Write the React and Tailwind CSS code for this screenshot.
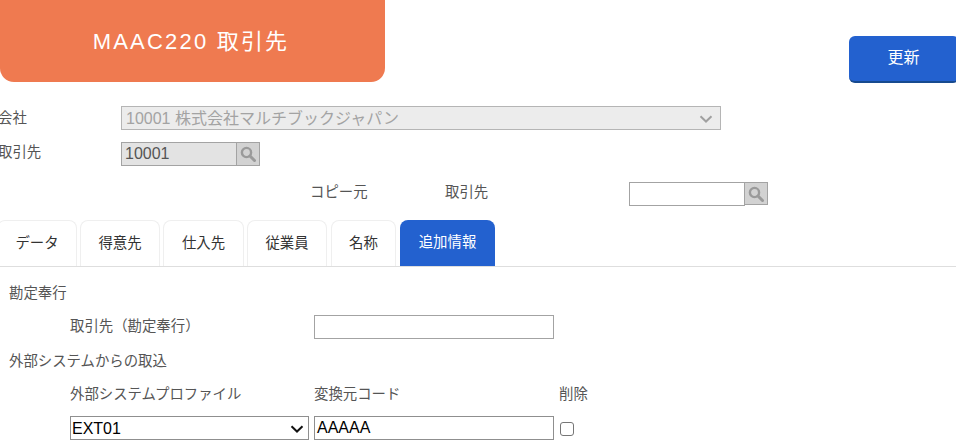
const font = "font-['Liberation_Sans','Noto_Sans_CJK_JP',sans-serif]";

function Mag() {
  return (
    <svg width="18" height="18" viewBox="0 0 18 18" fill="none">
      <circle cx="7.5" cy="7.5" r="4.6" stroke="#9a9a9a" strokeWidth="2.4" />
      <path d="M11 11l4.5 4.5" stroke="#9a9a9a" strokeWidth="3" strokeLinecap="round" />
    </svg>
  );
}

function Chevron({ color, className }) {
  return (
    <svg className={className} width="14" height="8" viewBox="0 0 14 8" fill="none">
      <path d="M1.5 1.2L7 6.5l5.5-5.3" stroke={color} strokeWidth="2" />
    </svg>
  );
}

function Tab({ children, w, active }) {
  return (
    <div
      className={
        active
          ? `${w} h-[46px] rounded-t-lg bg-[#2361cf] text-white flex items-center justify-center`
          : `${w} h-[46px] rounded-t-lg border border-b-0 border-[#efefef] bg-white text-[#333] flex items-center justify-center`
      }
    >
      {children}
    </div>
  );
}

export default function App() {
  return (
    <div className={`${font} w-[956px] h-[442px] overflow-hidden bg-white text-[#555] text-[14.4px]`}>
      <div className="flex items-start">
        <div className="w-[385px] h-[82px] shrink-0 bg-[#ef7a50] rounded-b-[14px] flex items-center justify-center pt-[1px] pr-[3px] text-white text-[22px] tracking-[2.2px]">
          MAAC220 取引先
        </div>
        <button className="ml-[464px] mt-[36px] w-[110px] h-[47px] shrink-0 rounded-md bg-[#2361cf] border-b-2 border-[#174a8f] text-white text-[16px] text-center pr-[1px] pb-[2px]">
          更新
        </button>
      </div>

      <div className="flex items-center mt-[23px] h-[24px]">
        <div className="w-[121px] -ml-[2px] mt-[2px] shrink-0">会社</div>
        <div className="relative ml-[2px] w-[600px] h-[24px]">
          <select
            disabled
            className="appearance-none w-full h-full border border-[#b5b5b5] bg-[#ececec] text-[#a3a3a3] text-[16px] pl-[4px] opacity-100"
          >
            <option>10001 株式会社マルチブックジャパン</option>
          </select>
          <Chevron color="#a0a0a0" className="absolute right-[8px] top-[9px]" />
        </div>
      </div>

      <div className="flex items-start mt-[12px] h-[24px]">
        <div className="w-[123px] -ml-[2px] shrink-0">取引先</div>
        <div className="w-[116px] h-[24px] border border-[#a3a3a3] bg-[#e3e3e3] text-[16px] text-[#555] pl-[3px] leading-[21px]">
          10001
        </div>
        <div className="w-[23px] h-[24px] border border-l-0 border-[#a3a3a3] bg-[#d2d2d2] flex items-center justify-center">
          <Mag />
        </div>
      </div>

      <div className="flex items-start mt-[16px] h-[24px]">
        <div className="ml-[310px] w-[135px]">コピー元</div>
        <div className="w-[184px]">取引先</div>
        <div className="w-[116px] h-[24px] border border-[#a3a3a3] bg-white" />
        <div className="w-[23px] h-[23px] border border-[#a3a3a3] border-l-0 bg-[#d2d2d2] flex items-center justify-center">
          <Mag />
        </div>
      </div>

      <div className="flex mt-[14px] h-[47px] border-b border-[#dedede] -ml-[3px] gap-[3px]">
        <Tab w="w-[80px]">データ</Tab>
        <Tab w="w-[80px]">得意先</Tab>
        <Tab w="w-[81px]">仕入先</Tab>
        <Tab w="w-[80px]">従業員</Tab>
        <div className="w-[1px] -ml-[3px]" />
        <Tab w="w-[65px]">名称</Tab>
        <div className="w-[1px] -ml-[3px]" />
        <Tab w="w-[95px]" active>追加情報</Tab>
      </div>

      <div className="pl-[9px] mt-[16px] h-[20px] leading-[20px]">勘定奉行</div>

      <div className="flex items-center mt-[12px] h-[24px]">
        <div className="ml-[70px] w-[244px]">取引先（勘定奉行）</div>
        <div className="w-[240px] h-[24px] border border-[#a3a3a3] bg-white" />
      </div>

      <div className="pl-[9px] mt-[12px] h-[20px] leading-[20px]">外部システムからの取込</div>

      <div className="flex items-center mt-[14px] h-[20px]">
        <div className="ml-[70px] w-[244px]">外部システムプロファイル</div>
        <div className="w-[245px]">変換元コード</div>
        <div>削除</div>
      </div>

      <div className="flex items-center mt-[11px] h-[24px]">
        <div className="relative ml-[70px] w-[239px] h-[24px]">
          <select className="appearance-none w-full h-full border border-[#8f8f8f] bg-white text-black text-[16px] pl-[1px]">
            <option>EXT01</option>
          </select>
          <Chevron color="#111" className="absolute right-[5px] top-[9px]" />
        </div>
        <div className="ml-[5px] w-[240px] h-[24px] border border-[#8f8f8f] bg-white text-black text-[16px] pl-[2px] leading-[21px]">
          AAAAA
        </div>
        <input type="checkbox" className="appearance-none ml-[6px] mt-[2px] w-[14px] h-[14px] border border-[#767676] rounded-[3px] bg-white" />
      </div>
    </div>
  );
}
